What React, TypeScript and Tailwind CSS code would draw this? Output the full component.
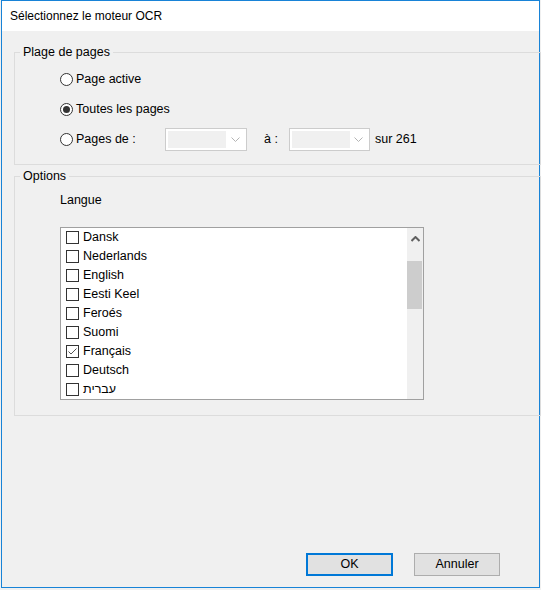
import React from "react";

const font = { fontFamily: '"Liberation Sans", Arial, sans-serif' };

function Radio({ checked }: { checked?: boolean }) {
  return (
    <span className="w-[13px] h-[13px] rounded-full border border-[#333333] bg-white flex items-center justify-center shrink-0">
      {checked && <span className="w-[7px] h-[7px] rounded-full bg-[#333333]" />}
    </span>
  );
}

function Combo({ w }: { w: string }) {
  return (
    <div className={`${w} h-[23px] border border-[#cccccc] bg-white flex items-center pl-[2px] pr-[6px]`}>
      <div className="w-[58px] h-[17px] bg-[#f0f0f0]" />
      <div className="flex-1 flex justify-end">
        <svg width="9" height="6" viewBox="0 0 9 6">
          <path d="M0.5 0.5 L4.5 4.5 L8.5 0.5" fill="none" stroke="#b4b4b4" strokeWidth="1" />
        </svg>
      </div>
    </div>
  );
}

function Check({ checked }: { checked?: boolean }) {
  return (
    <span className="w-[13px] h-[13px] border border-[#333333] bg-white flex items-center justify-center shrink-0">
      {checked && (
        <svg width="11" height="11" viewBox="0 0 11 11">
          <path d="M1.5 5.5 L4 8 L9.5 2.5" fill="none" stroke="#555555" strokeWidth="1" />
        </svg>
      )}
    </span>
  );
}

const langs = [
  "Dansk",
  "Nederlands",
  "English",
  "Eesti Keel",
  "Feroés",
  "Suomi",
  "Français",
  "Deutsch",
  "עברית",
];

export default function App() {
  return (
    <div className="w-[541px] h-[590px] bg-[#f0f0f0] pl-[1px] text-[#000000]" style={font}>
      <div className="w-[539px] h-[588px] border border-[#1883d7] bg-[#f0f0f0] flex flex-col">
        <div className="h-[30px] bg-white flex items-center pl-[8px] text-[12px]">
          Sélectionnez le moteur OCR
        </div>
        <div className="flex-1 flex flex-col pl-[12px] text-[12.5px]">
          <fieldset className="mt-[14px] border border-[#dcdcdc] mr-[-2px] pb-[13px]">
            <legend className="ml-[5px] px-[3px] leading-[14px]">Plage de pages</legend>
            <div className="flex flex-col pl-[45px] mt-[9px] gap-[8px]">
              <div className="h-[22px] flex items-center gap-[3px]">
                <Radio />
                <span>Page active</span>
              </div>
              <div className="h-[22px] flex items-center gap-[3px]">
                <Radio checked />
                <span>Toutes les pages</span>
              </div>
              <div className="h-[23px] flex items-center">
                <div className="w-[105px] flex items-center gap-[3px]">
                  <Radio />
                  <span>Pages de :</span>
                </div>
                <Combo w="w-[82px]" />
                <span className="ml-[17px] w-[25px]">à :</span>
                <Combo w="w-[81px]" />
                <span className="ml-[5px]">sur 261</span>
              </div>
            </div>
          </fieldset>
          <fieldset className="mt-[4px] border border-[#dcdcdc] mr-[-2px] pb-[15px]">
            <legend className="ml-[5px] px-[3px] leading-[14px]">Options</legend>
            <div className="pl-[45px] mt-[10px] leading-[15px]">Langue</div>
            <div className="ml-[45px] mt-[19px] w-[364px] h-[173px] border border-[#a0a0a0] bg-white flex">
              <div className="flex-1 flex flex-col pl-[5px]">
                {langs.map((l, i) => (
                  <div key={l} className="h-[19px] flex items-center gap-[4px]">
                    <Check checked={i === 6} />
                    <span>{l}</span>
                  </div>
                ))}
              </div>
              <div className="w-[16px] bg-[#f0f0f0] flex flex-col">
                <div className="h-[22px] flex items-center justify-center">
                  <svg width="9" height="6" viewBox="0 0 9 6">
                    <path d="M0.5 5 L4.5 1 L8.5 5" fill="none" stroke="#606060" strokeWidth="2" />
                  </svg>
                </div>
                <div className="mt-[11px] h-[48px] mr-[1px] bg-[#cdcdcd]" />
              </div>
            </div>
          </fieldset>
        </div>
        <div className="flex justify-end gap-[21px] pr-[39px] pb-[11px] text-[12.5px]">
          <button className="w-[87px] h-[23px] border-2 border-[#0078d7] bg-[#e1e1e1] flex items-center justify-center">
            OK
          </button>
          <button className="w-[86px] h-[23px] border border-[#adadad] bg-[#e1e1e1] flex items-center justify-center">
            Annuler
          </button>
        </div>
      </div>
    </div>
  );
}
